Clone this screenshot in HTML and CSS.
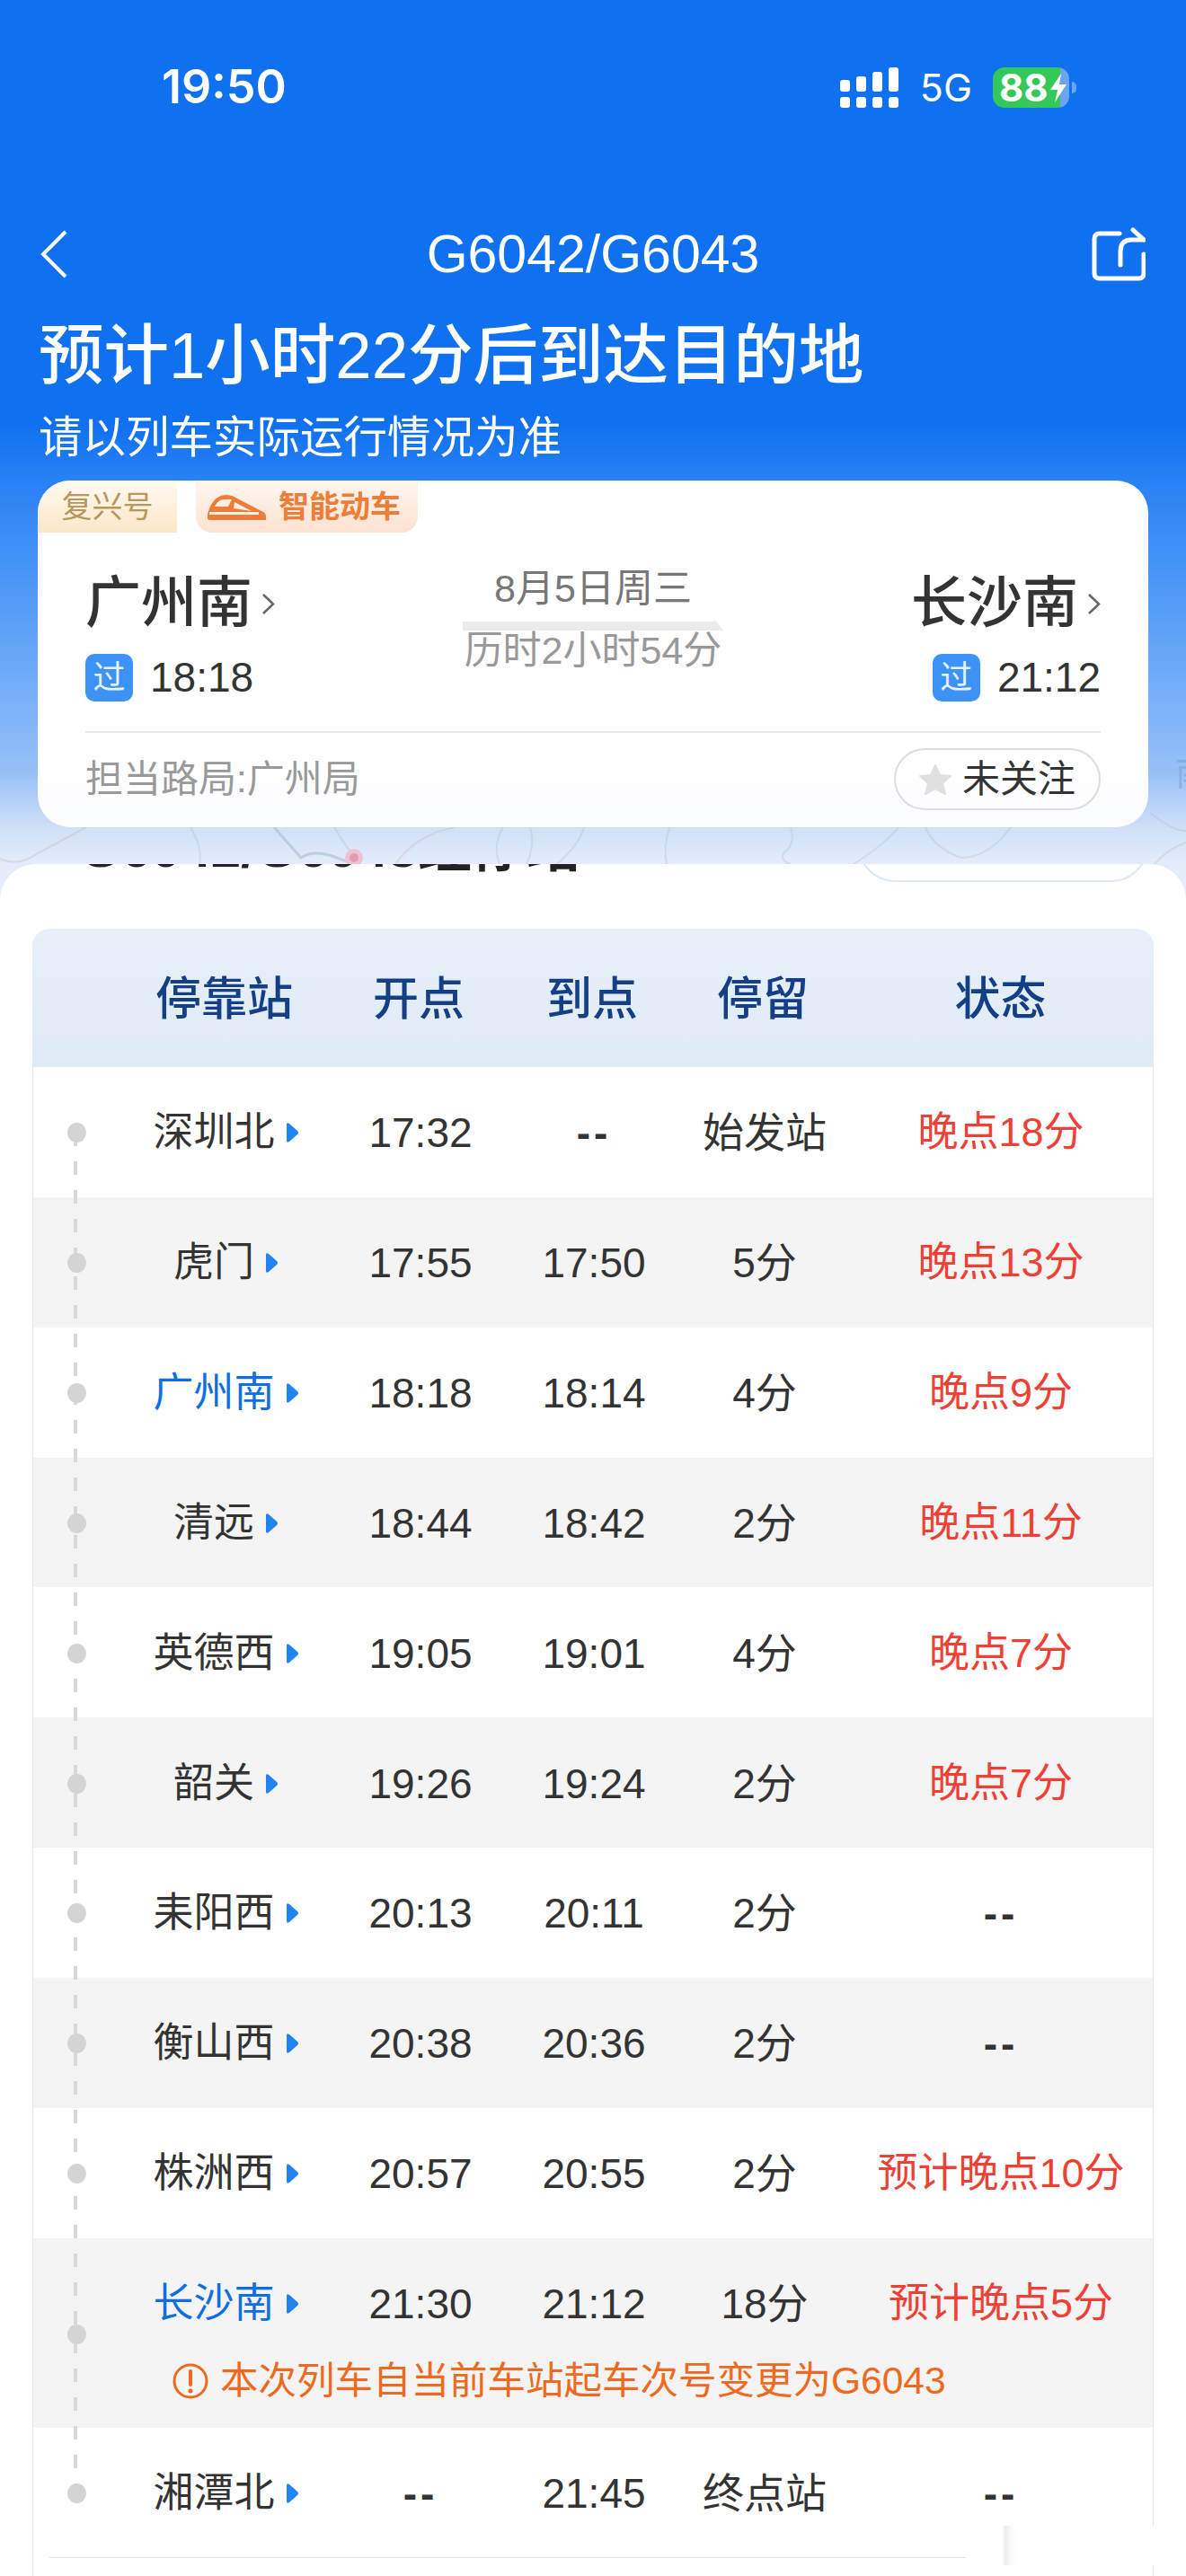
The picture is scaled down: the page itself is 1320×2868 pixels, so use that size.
FILE: index.html
```html
<!DOCTYPE html>
<html lang="zh-CN">
<head>
    <meta charset="UTF-8">
    <meta name="viewport" content="width=device-width, initial-scale=1.0">
    <title>G6042/G6043</title>
    <link rel="stylesheet" href="styles.css">
</head>
<body>
    <header class="hero">
        <svg class="map" viewBox="0 0 1320 1002" width="1320" height="1002">
            <g fill="none" stroke="#b9b4b8" stroke-opacity="0.3" stroke-width="2">
                <path d="M0 956 Q20 966 42 950 L96 921"/>
                <path d="M212 921 Q226 945 222 962"/>
                <path d="M372 921 Q384 942 396 955"/>
                <path d="M440 962 Q462 930 506 921"/>
                <path d="M556 962 Q548 940 560 921"/>
                <path d="M586 962 Q596 940 590 921"/>
                <path d="M620 962 Q645 940 650 921"/>
                <path d="M745 921 Q738 945 742 962"/>
                <path d="M880 921 Q886 940 872 950 Q868 958 880 962"/>
                <path d="M950 962 Q985 940 1000 921"/>
                <path d="M1030 921 Q1040 945 1070 955 Q1100 955 1125 921"/>
                <path d="M1280 905 Q1305 925 1320 925"/>
                <path d="M1285 962 Q1300 945 1320 938"/>
            </g>
            <path d="M305 921 L335 955 Q350 945 375 955 L395 962" fill="none" stroke="#a9bcd6" stroke-opacity="0.6" stroke-width="3"/>
            <circle cx="394" cy="955" r="10" fill="#eec2cf"/>
            <circle cx="394" cy="955" r="5" fill="#e39db1"/>
            <text x="1308" y="874" class="map-label">南</text>
        </svg>

        <div class="status">
            <span class="clock">19:50</span>
            <div class="status-right">
                <div class="signal">
                    <span class="bar bar1"></span>
                    <span class="bar bar2"></span>
                    <span class="bar bar3"></span>
                    <span class="bar bar4"></span>
                </div>
                <span class="net">5G</span>
                <div class="battery">
                    <span class="level">88</span>
                    <svg class="bolt" viewBox="0 0 20 32" width="20" height="32"><path d="M13 0 L1 18 H9 L6 32 L19 12 H11 Z" fill="#fff"/></svg>
                </div>
                <span class="nub"></span>
            </div>
        </div>

        <nav class="topnav">
            <svg class="back" viewBox="0 0 30 54" width="30" height="54"><path d="M28 2 L3 27 L28 52" fill="none" stroke="#fff" stroke-width="4"/></svg>
            <span class="train-no">G6042/G6043</span>
            <svg class="share" viewBox="0 0 60 60" width="60" height="60">
                <g fill="none" stroke="#fff" stroke-width="5" stroke-linecap="round" stroke-linejoin="round">
                    <path d="M31 7 H9 Q3 7 3 13 V51 Q3 57 9 57 H52 Q58 57 58 51 V30"/>
                    <path d="M32 42 V27 Q32 14 44 14 H58"/>
                    <path d="M46 3 L58 14"/>
                </g>
            </svg>
        </nav>

        <h1 class="eta">预计1小时22分后到达目的地</h1>
        <p class="eta-note">请以列车实际运行情况为准</p>

        <section class="card">
            <div class="tags">
                <span class="tag tag-fx">复兴号</span>
                <span class="tag tag-smart">
                    <svg viewBox="0 0 67 29" width="67" height="29">
                        <path d="M4 29 Q0 29 1 24 C3 12 10 1 22 1 Q28 1 34 5 L63 20 Q67 22 66 29 Z" fill="#ee7d38"/>
                        <path d="M9 14 C11 9 15 6 20 6 L28 6 L24 14 Z" fill="#fdeee3"/>
                        <path d="M31 9 L50 19 L30 16 Z" fill="#fdeee3"/>
                        <path d="M3 20 H58 V23 H3 Z" fill="#fdeee3"/>
                    </svg>
                    智能动车
                </span>
            </div>

            <div class="route">
                <div class="stop">
                    <div class="stop-name">广州南<svg viewBox="0 0 15 25" width="15" height="25"><path d="M2 2 L13 12.5 L2 23" fill="none" stroke="#666" stroke-width="2.5"/></svg></div>
                    <div class="stop-time"><span class="badge">过</span>18:18</div>
                </div>
                <div class="trip">
                    <div class="trip-date">8月5日周三</div>
                    <svg viewBox="0 0 290 13" width="290" height="13"><path d="M0 3 H280 V0 L290 13 H0 Z" fill="#ebebeb"/></svg>
                    <div class="trip-span">历时2小时54分</div>
                </div>
                <div class="stop stop-end">
                    <div class="stop-name">长沙南<svg viewBox="0 0 15 25" width="15" height="25"><path d="M2 2 L13 12.5 L2 23" fill="none" stroke="#666" stroke-width="2.5"/></svg></div>
                    <div class="stop-time"><span class="badge">过</span>21:12</div>
                </div>
            </div>

            <div class="card-foot">
                <span class="bureau">担当路局:广州局</span>
                <div class="follow">
                    <svg viewBox="0 0 38 36" width="38" height="36"><path d="M19 2 L24 13 L36 14 L27 22 L30 34 L19 28 L8 34 L11 22 L2 14 L14 13 Z" fill="#e0e0e0" stroke="#e0e0e0" stroke-width="2" stroke-linejoin="round"/></svg>
                    未关注
                </div>
            </div>
        </section>
    </header>

    <main class="sheet">
        <div class="sheet-title">
            <h2>G6042/G6043经停站</h2>
            <span class="sheet-btn">查看详情</span>
        </div>

        <div class="table">
            <div class="line"></div>

            <div class="thead">
                <span></span>
                <span>停靠站</span>
                <span>开点</span>
                <span>到点</span>
                <span>停留</span>
                <span>状态</span>
            </div>

            <div class="row">
                <span class="dot"></span>
                <span class="name">深圳北<svg class="go" viewBox="0 0 15 24" width="15" height="24"><path d="M1 3 Q1 0 4 2 L13 10 Q15 12 13 14 L4 22 Q1 24 1 21 Z"/></svg></span>
                <span>17:32</span>
                <span class="none">--</span>
                <span>始发站</span>
                <span class="late">晚点18分</span>
            </div>
            <div class="row alt">
                <span class="dot"></span>
                <span class="name">虎门<svg class="go" viewBox="0 0 15 24" width="15" height="24"><path d="M1 3 Q1 0 4 2 L13 10 Q15 12 13 14 L4 22 Q1 24 1 21 Z"/></svg></span>
                <span>17:55</span>
                <span>17:50</span>
                <span>5分</span>
                <span class="late">晚点13分</span>
            </div>
            <div class="row">
                <span class="dot"></span>
                <span class="name here">广州南<svg class="go" viewBox="0 0 15 24" width="15" height="24"><path d="M1 3 Q1 0 4 2 L13 10 Q15 12 13 14 L4 22 Q1 24 1 21 Z"/></svg></span>
                <span>18:18</span>
                <span>18:14</span>
                <span>4分</span>
                <span class="late">晚点9分</span>
            </div>
            <div class="row alt">
                <span class="dot"></span>
                <span class="name">清远<svg class="go" viewBox="0 0 15 24" width="15" height="24"><path d="M1 3 Q1 0 4 2 L13 10 Q15 12 13 14 L4 22 Q1 24 1 21 Z"/></svg></span>
                <span>18:44</span>
                <span>18:42</span>
                <span>2分</span>
                <span class="late">晚点11分</span>
            </div>
            <div class="row">
                <span class="dot"></span>
                <span class="name">英德西<svg class="go" viewBox="0 0 15 24" width="15" height="24"><path d="M1 3 Q1 0 4 2 L13 10 Q15 12 13 14 L4 22 Q1 24 1 21 Z"/></svg></span>
                <span>19:05</span>
                <span>19:01</span>
                <span>4分</span>
                <span class="late">晚点7分</span>
            </div>
            <div class="row alt">
                <span class="dot"></span>
                <span class="name">韶关<svg class="go" viewBox="0 0 15 24" width="15" height="24"><path d="M1 3 Q1 0 4 2 L13 10 Q15 12 13 14 L4 22 Q1 24 1 21 Z"/></svg></span>
                <span>19:26</span>
                <span>19:24</span>
                <span>2分</span>
                <span class="late">晚点7分</span>
            </div>
            <div class="row">
                <span class="dot"></span>
                <span class="name">耒阳西<svg class="go" viewBox="0 0 15 24" width="15" height="24"><path d="M1 3 Q1 0 4 2 L13 10 Q15 12 13 14 L4 22 Q1 24 1 21 Z"/></svg></span>
                <span>20:13</span>
                <span>20:11</span>
                <span>2分</span>
                <span class="none">--</span>
            </div>
            <div class="row alt">
                <span class="dot"></span>
                <span class="name">衡山西<svg class="go" viewBox="0 0 15 24" width="15" height="24"><path d="M1 3 Q1 0 4 2 L13 10 Q15 12 13 14 L4 22 Q1 24 1 21 Z"/></svg></span>
                <span>20:38</span>
                <span>20:36</span>
                <span>2分</span>
                <span class="none">--</span>
            </div>
            <div class="row">
                <span class="dot"></span>
                <span class="name">株洲西<svg class="go" viewBox="0 0 15 24" width="15" height="24"><path d="M1 3 Q1 0 4 2 L13 10 Q15 12 13 14 L4 22 Q1 24 1 21 Z"/></svg></span>
                <span>20:57</span>
                <span>20:55</span>
                <span>2分</span>
                <span class="late">预计晚点10分</span>
            </div>
            <div class="row row-long alt">
                <span class="dot"></span>
                <span class="name here">长沙南<svg class="go" viewBox="0 0 15 24" width="15" height="24"><path d="M1 3 Q1 0 4 2 L13 10 Q15 12 13 14 L4 22 Q1 24 1 21 Z"/></svg></span>
                <span>21:30</span>
                <span>21:12</span>
                <span>18分</span>
                <span class="late">预计晚点5分</span>
                <div class="notice">
                    <svg viewBox="0 0 40 40" width="40" height="40">
                        <circle cx="20" cy="20" r="18" fill="none" stroke="#ee6a20" stroke-width="3"/>
                        <path d="M20 9 V24" stroke="#ee6a20" stroke-width="4" stroke-linecap="round"/>
                        <circle cx="20" cy="31" r="2.5" fill="#ee6a20"/>
                    </svg>
                    本次列车自当前车站起车次号变更为G6043
                </div>
            </div>
            <div class="row">
                <span class="dot"></span>
                <span class="name">湘潭北<svg class="go" viewBox="0 0 15 24" width="15" height="24"><path d="M1 3 Q1 0 4 2 L13 10 Q15 12 13 14 L4 22 Q1 24 1 21 Z"/></svg></span>
                <span class="none">--</span>
                <span>21:45</span>
                <span>终点站</span>
                <span class="none">--</span>
            </div>
            <div class="table-end"></div>
        </div>
        <div class="stamp"></div>
    </main>
</body>
</html>
```

FILE: styles.css
```css
* {
    margin: 0;
    padding: 0;
    box-sizing: border-box;
}

html, body {
    width: 1320px;
    height: 2868px;
    overflow: hidden;
}

body {
    font-family: "Liberation Sans", "Noto Sans CJK SC", sans-serif;
    color: #333;
    background-color: #fff;
}

.hero {
    position: relative;
    height: 1002px;
    padding-top: 70px;
    background: linear-gradient(180deg, #0f70f0 0, #0f70f0 470px, #2a82f5 540px, #6aa9f8 740px, #97c0f8 860px, #cfe0f8 921px, #e3ecfa 962px, #e8effa 1002px);
    color: #fff;
}

.map {
    position: absolute;
    left: 0;
    top: 0;
}

.map-label {
    font-size: 38px;
    fill: #7f9fca;
    fill-opacity: 0.55;
}

.status {
    position: relative;
    display: flex;
    justify-content: space-between;
    align-items: center;
    height: 54px;
    padding: 0 122px 0 180px;
}

.clock {
    font-family: Inter, sans-serif;
    font-size: 52px;
    font-weight: 600;
    line-height: 54px;
}

.status-right {
    display: flex;
    align-items: center;
}

.signal {
    display: flex;
    gap: 7px;
    align-items: flex-end;
    height: 45px;
}

.bar {
    position: relative;
    width: 11px;
    background-color: #fff;
    border-radius: 3px;
    margin-bottom: 18px;
}

.bar::after {
    content: "";
    position: absolute;
    left: 0;
    bottom: -18px;
    width: 11px;
    height: 12px;
    background-color: #fff;
    border-radius: 3px;
}

.bar1 { height: 13px; }
.bar2 { height: 17px; }
.bar3 { height: 22px; }
.bar4 { height: 27px; }

.net {
    font-family: Inter, sans-serif;
    font-size: 43px;
    line-height: 45px;
    margin-left: 24px;
}

.battery {
    position: relative;
    display: flex;
    align-items: center;
    width: 85px;
    height: 45px;
    margin-left: 23px;
    padding-left: 7px;
    border-radius: 13px;
    background: linear-gradient(90deg, #34c759 0, #34c759 75px, #6ea3f2 75px);
}

.level {
    font-family: Inter, sans-serif;
    font-size: 42px;
    font-weight: 700;
    line-height: 45px;
}

.bolt {
    position: absolute;
    left: 63px;
    top: 7px;
}

.nub {
    width: 5px;
    height: 13px;
    margin-left: 3px;
    border-radius: 0 5px 5px 0;
    background-color: #6ea3f2;
}

.topnav {
    position: relative;
    display: grid;
    grid-template-columns: 1fr auto 1fr;
    align-items: center;
    height: 62px;
    margin-top: 128px;
    padding: 0 45px;
}

.back {
    justify-self: start;
}

.share {
    justify-self: end;
}

.train-no {
    font-size: 59px;
    line-height: 62px;
}

.eta {
    position: relative;
    height: 80px;
    margin-top: 42px;
    padding-left: 43px;
    font-size: 72.5px;
    font-weight: 500;
    line-height: 80px;
}

.eta-note {
    position: relative;
    height: 56px;
    margin-top: 23px;
    padding-left: 43px;
    font-size: 48.5px;
    line-height: 56px;
}

.card {
    position: relative;
    width: 1236px;
    height: 386px;
    margin: 20px 0 0 42px;
    border-radius: 36px;
    background: linear-gradient(180deg, #fff 80%, #fbfcff 100%);
    color: #333;
    overflow: hidden;
}

.tags {
    display: flex;
    gap: 21px;
    height: 58px;
}

.tag {
    display: flex;
    align-items: center;
    height: 58px;
    font-size: 34px;
    line-height: 58px;
}

.tag-fx {
    width: 155px;
    justify-content: center;
    color: #b8975f;
    background: linear-gradient(180deg, #fffaf2 0, #fde6c8 100%);
}

.tag-smart {
    width: 247px;
    padding-left: 12px;
    gap: 13px;
    color: #ee7d38;
    font-weight: 700;
    border-radius: 0 0 18px 18px;
    background: linear-gradient(180deg, #fff6ef 0, #fde2d0 100%);
}

.route {
    display: grid;
    grid-template-columns: 1fr auto 1fr;
    padding: 40px 53px 0;
}

.stop-name {
    display: flex;
    align-items: center;
    gap: 10px;
    height: 74px;
    padding-top: 4px;
    font-size: 62px;
    font-weight: 500;
    line-height: 70px;
}

.stop-time {
    display: flex;
    align-items: center;
    gap: 19px;
    height: 53px;
    margin-top: 21px;
    font-size: 46px;
    line-height: 53px;
}

.stop-end {
    justify-self: end;
}

.stop-end .stop-name,
.stop-end .stop-time {
    justify-content: flex-end;
}

.badge {
    width: 53px;
    height: 53px;
    border-radius: 10px;
    background-color: #3d93f5;
    color: #e6f2ff;
    font-size: 36px;
    line-height: 53px;
    text-align: center;
}

.trip {
    display: flex;
    flex-direction: column;
    align-items: center;
}

.trip-date {
    height: 44px;
    font-size: 43px;
    line-height: 44px;
    color: #777;
}

.trip svg {
    display: block;
    margin-top: 12px;
}

.trip-span {
    height: 44px;
    font-size: 43px;
    line-height: 44px;
    color: #999;
}

.card-foot {
    display: flex;
    justify-content: space-between;
    align-items: center;
    margin: 33px 53px 0;
    padding-top: 17px;
    border-top: 2px solid #e8e8e8;
}

.bureau {
    font-size: 42px;
    line-height: 69px;
    color: #999;
}

.follow {
    display: flex;
    align-items: center;
    gap: 11px;
    width: 230px;
    height: 69px;
    padding-left: 25px;
    border: 2px solid #ddd;
    border-radius: 35px;
    font-size: 42px;
    line-height: 65px;
}

.sheet {
    position: relative;
    height: 1906px;
    margin-top: -40px;
    border-radius: 40px 40px 0 0;
    background-color: #fff;
    overflow: hidden;
}

.sheet-title {
    display: flex;
    justify-content: space-between;
    align-items: center;
    height: 82px;
    margin-top: -62px;
    padding: 0 42px 0 88px;
}

.sheet-title h2 {
    margin-top: 8px;
    font-size: 60px;
    font-weight: 700;
    line-height: 60px;
    color: #222;
}

.sheet-btn {
    width: 323px;
    height: 82px;
    padding-left: 140px;
    border: 2px solid #dce8f6;
    border-radius: 41px;
    font-size: 44px;
    line-height: 78px;
    color: #1f7ae0;
}

.table {
    position: relative;
    width: 1248px;
    height: 1834px;
    margin: 52px 0 0 36px;
    border-left: 1px solid #e8e8e8;
    border-right: 1px solid #e8e8e8;
    border-radius: 20px 20px 0 0;
}

.line {
    position: absolute;
    left: 45px;
    top: 227px;
    z-index: 1;
    width: 4px;
    height: 1516px;
    background: repeating-linear-gradient(180deg, #d8d8d8 0, #d8d8d8 15px, transparent 15px, transparent 32px);
}

.thead,
.row {
    display: grid;
    grid-template-columns: 94px 239px 194px 192px 188px 1fr;
    align-items: center;
    justify-items: center;
    text-align: center;
}

.thead {
    height: 154px;
    margin: 0 -1px;
    padding-bottom: 6px;
    border-radius: 20px 20px 0 0;
    background: linear-gradient(180deg, #e8f0f9 0, #deeaf6 100%);
    font-size: 51px;
    font-weight: 500;
    color: #143f86;
}

.row {
    height: 144.85px;
    padding: 2px 0 0 1px;
    font-size: 46px;
    line-height: 56px;
}

.alt {
    background-color: #f4f4f4;
}

.row-long {
    height: 211px;
    grid-template-rows: 142px 69px;
}

.dot {
    position: relative;
    z-index: 2;
    width: 21px;
    height: 22px;
    border-radius: 50%;
    background-color: #d4d4d4;
}

.row-long .dot {
    grid-row: 1 / 3;
}

.name {
    display: flex;
    align-items: center;
    gap: 12px;
    font-size: 45px;
}

.here {
    color: #0f6fe0;
}

.go {
    fill: #1f84f0;
}

.none {
    font-weight: 700;
    letter-spacing: 4px;
}

.late {
    color: #ee4034;
    font-size: 45px;
}

.notice {
    grid-column: 2 / -1;
    justify-self: start;
    align-self: start;
    display: flex;
    align-items: center;
    gap: 13px;
    height: 50px;
    margin: -10px 0 0 60px;
    font-size: 42.5px;
    line-height: 50px;
    color: #ee6a20;
}

.table-end {
    width: 1020px;
    margin-left: 18px;
    border-top: 1px solid #e4e4e4;
}

.stamp {
    position: absolute;
    left: 1075px;
    top: 1850px;
    width: 240px;
    height: 44px;
    background: linear-gradient(90deg, #fff 40px, #ececec 44px, #fafafa 50px, #fff 56px);
}
```
